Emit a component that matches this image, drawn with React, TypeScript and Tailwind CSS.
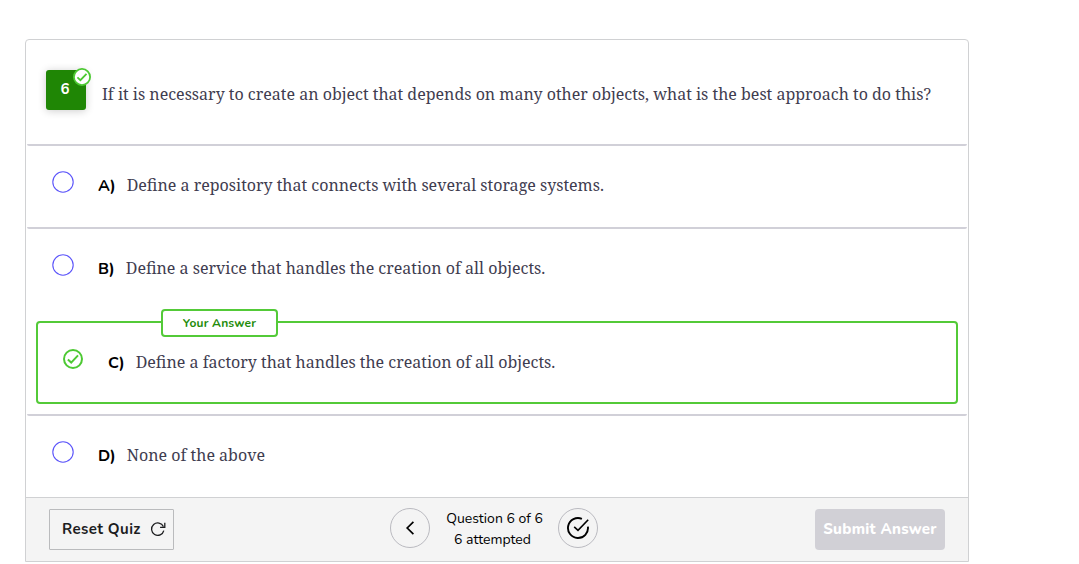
function CheckCircle({ size, filled }: { size: number; filled?: boolean }) {
  return (
    <svg width={size} height={size} viewBox="0 0 20 20" fill={filled ? "#fff" : "none"} stroke="#4dc933" strokeWidth="2">
      <circle cx="10" cy="10" r="9" />
      <path d="M4.9 10.5 8.2 13.6 15 6.4" fill="none" />
    </svg>
  );
}

function Option({ letter, text }: { letter: string; text: string }) {
  return (
    <div className="flex h-[81px] pl-[26px]">
      <svg className="mt-[25px] shrink-0" width="22" height="22" viewBox="0 0 22 22" fill="none" stroke="#5b54fa" strokeWidth="1.1">
        <circle cx="11" cy="11" r="10.2" />
      </svg>
      <Label letter={letter} text={text} />
    </div>
  );
}

function Label({ letter, text }: { letter: string; text: string }) {
  return (
    <p className="mt-7 ml-6 flex h-6 items-center gap-[11px] whitespace-nowrap">
      <span className="font-['Nunito',sans-serif] text-base font-bold text-black">{letter})</span>
      <span className="pb-0.5 font-['Noto_Serif',serif] text-base text-[#3f3d50]">{text}</span>
    </p>
  );
}

function Divider() {
  return <div className="mx-px h-0.5 rounded-b-sm bg-[#d1d0d8]" />;
}

export default function App() {
  return (
    <main className="h-[564px] overflow-hidden bg-white pt-[39px] pl-[25px] font-['Nunito',sans-serif]">
      <section className="h-[523px] w-[944px] rounded-t border border-[#d0d1d3]">
        <header className="flex h-[104px] pt-[30px] pl-5">
          <div className="relative flex h-10 w-10 shrink-0 items-center justify-center rounded-[3px] bg-[#1f8605] pr-0.5 pb-0.5 text-[15px] font-bold text-white shadow-[0_1px_8px_rgba(0,0,0,0.2)]">
            6
            <span className="absolute -top-[2px] left-[27px]">
              <CheckCircle size={18} filled />
            </span>
          </div>
          <h1 className="mt-3 ml-4 h-6 font-['Noto_Serif',serif] text-base leading-6 whitespace-nowrap text-[#3f3d50]">
            If it is necessary to create an object that depends on many other objects, what is the best approach to do this?
          </h1>
        </header>
        <Divider />
        <Option letter="A" text="Define a repository that connects with several storage systems." />
        <Divider />
        <Option letter="B" text="Define a service that handles the creation of all objects." />
        <div className="relative mx-2.5 mt-[11px] mb-2.5 flex h-[83px] rounded border-2 border-[#53ca38] pl-[25px]">
          <span className="absolute -top-[14px] left-[123px] flex h-7 w-[117px] items-center justify-center rounded border-2 border-[#53ca38] bg-white text-xs font-bold tracking-[0.2px] text-[#248c0b]">
            Your Answer
          </span>
          <span className="mt-[26px] w-[21px] shrink-0">
            <CheckCircle size={20} />
          </span>
          <Label letter="C" text="Define a factory that handles the creation of all objects." />
        </div>
        <Divider />
        <Option letter="D" text="None of the above" />
        <footer className="flex h-16 items-start border-t border-[#d0d1d3] bg-[#f4f4f4] pl-[23px]">
          <button className="mt-[11px] flex h-[41px] w-[125px] items-center gap-[9px] rounded-[1px] border border-[#babbbd] pl-3 text-[15px] font-bold tracking-[0.4px] whitespace-nowrap text-[#1c1d1f]">
            Reset Quiz
            <svg className="mb-0.5" width="16" height="16" viewBox="0 0 16 16" fill="none" stroke="currentColor" strokeWidth="1.3">
              <path d="M13.4 5.5A6.2 6.2 0 1 0 13.8 9.6M14.8 1.8v4.6h-4.7" />
            </svg>
          </button>
          <button className="mt-2.5 ml-[216px] flex h-10 w-10 items-center justify-center rounded-full border border-[#babac0] text-black">
            <svg width="20" height="20" viewBox="0 0 20 20" fill="none" stroke="currentColor" strokeWidth="1.7">
              <path d="M13.4 3.8 7.2 10 13.4 16.2" />
            </svg>
          </button>
          <div className="mt-2.5 w-32 text-center text-sm leading-[21px] text-black">
            <p className="pl-px">Question 6 of 6</p>
            <p className="pr-[3px]">6 attempted</p>
          </div>
          <button className="mt-2.5 flex h-10 w-10 items-center justify-center rounded-full border border-[#babac0] text-black">
            <svg width="24" height="24" viewBox="0 0 24 24" fill="none" stroke="currentColor" strokeWidth="1.9">
              <path d="M15.9 2.8A10 10 0 1 0 21.9 10.7" />
              <path d="M8.2 10.8 12 14.3 22.2 3.8" strokeWidth="1.6" />
            </svg>
          </button>
          <button className="mt-[11px] ml-[217px] h-[41px] w-[130px] rounded-sm bg-[#d1d0d6] text-[15px] font-extrabold tracking-[0.3px] whitespace-nowrap text-white">
            Submit Answer
          </button>
        </footer>
      </section>
    </main>
  );
}
